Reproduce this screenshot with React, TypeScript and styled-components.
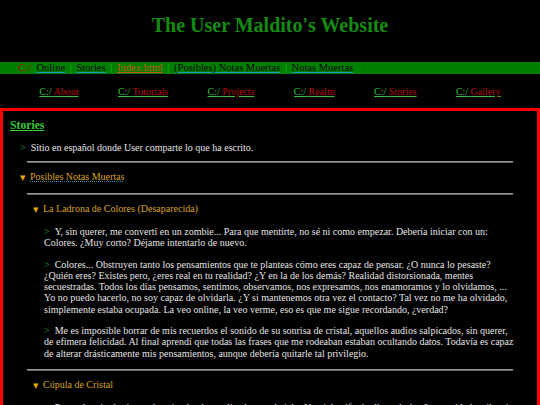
import React from "react";
import styled, { createGlobalStyle } from "styled-components";

const GlobalStyle = createGlobalStyle`
  html, body {
    margin: 0;
    padding: 0;
    background: #000;
  }
  body {
    font-family: "Liberation Serif", "Times New Roman", serif;
    font-size: 10px;
    color: #e4e4e4;
  }
`;

const Header = styled.header`
  padding: 13.5px 0 25.5px;
  text-align: center;
`;

const Title = styled.h1`
  margin: 0;
  font-size: 20px;
  font-weight: bold;
  color: #148c14;
`;

const CrumbBar = styled.div`
  background: #008000;
  padding-left: 18px;
  height: 11.5px;
  line-height: 11.5px;
  font-size: 10.5px;
  white-space: nowrap;
`;

const Drive = styled.span`
  color: #a01000;
  margin-right: 3px;
`;

const Crumb = styled.a<{ $current?: boolean }>`
  color: ${(p) => (p.$current ? "#c4561c" : "#000")};
  text-decoration: underline;
  text-decoration-color: ${(p) => (p.$current ? "#c4561c" : "#1a9dc4")};
`;

const Sep = styled.span`
  color: #33b833;
  padding: 0 2px;
`;

const Nav = styled.nav`
  display: flex;
  justify-content: space-evenly;
  padding: 12.75px 0 10.25px;
  line-height: 11.5px;
`;

const NavLink = styled.a`
  color: #35c035;
  text-decoration: underline;
  text-decoration-color: #35c035;
`;

const NavName = styled.span`
  color: #b30c0c;
`;

const Section = styled.section`
  border: 3px solid #f00;
  padding: 8px 7px 40px;
`;

const SectionTitle = styled.h3`
  margin: 0 0 9.5px;
  font-size: 11.7px;
  font-weight: bold;
  color: #33cc33;
  text-decoration: underline;
`;

const Intro = styled.p`
  margin: 0;
  padding-left: 10px;
  line-height: 11.5px;
`;

const Arrow = styled.span`
  color: #2aa52a;
  margin-right: 5px;
`;

const Rule = styled.hr`
  margin: 8px 17px;
  border: none;
  border-top: 1px solid #9a9a9a;
  border-bottom: 1px solid #6a6a6a;
`;

const Details = styled.details``;

const Summary = styled.summary<{ $indent: number; $linked?: boolean }>`
  list-style: none;
  padding-left: ${(p) => p.$indent}px;
  color: #d9a21e;
  line-height: 11.5px;
  cursor: pointer;
  &::-webkit-details-marker {
    display: none;
  }
  span.label {
    text-decoration: ${(p) => (p.$linked ? "underline dotted" : "none")};
    text-decoration-color: #1f8fb0;
  }
`;

const Marker = styled.span`
  display: inline-block;
  font-family: "DejaVu Sans", sans-serif;
  font-size: 7px;
  color: #e8a800;
  width: 10px;
`;

const StoryBody = styled.div`
  padding: 10px 13px 0 34px;
`;

const Para = styled.p`
  margin: 0 0 10px;
  line-height: 11.3px;
`;

const stories = [
  {
    title: "La Ladrona de Colores (Desaparecida)",
    paragraphs: [
      "Y, sin querer, me convertí en un zombie... Para que mentirte, no sé ni como empezar. Debería iniciar con un: Colores. ¿Muy corto? Déjame intentarlo de nuevo.",
      "Colores... Obstruyen tanto los pensamientos que te planteas cómo eres capaz de pensar. ¿O nunca lo pesaste? ¿Quién eres? Existes pero, ¿eres real en tu realidad? ¿Y en la de los demás? Realidad distorsionada, mentes secuestradas. Todos los días pensamos, sentimos, observamos, nos expresamos, nos enamoramos y lo olvidamos, ... Yo no puedo hacerlo, no soy capaz de olvidarla. ¿Y si mantenemos otra vez el contacto? Tal vez no me ha olvidado, simplemente estaba ocupada. La veo online, la veo verme, eso es que me sigue recordando, ¿verdad?",
      "Me es imposible borrar de mis recuerdos el sonido de su sonrisa de cristal, aquellos audios salpicados, sin querer, de efimera felicidad. Al final aprendí que todas las frases que me rodeaban estaban ocultando datos. Todavía es capaz de alterar drásticamente mis pensamientos, aunque debería quitarle tal privilegio.",
    ],
  },
  {
    title: "Cúpula de Cristal",
    paragraphs: [
      "Pongo la mirada sin rumbo, siendo obstaculizado por el cielo. Un cielo cifrado, lleno de 1 y 0, oscuridad y silencio. Nada parece real bajo esta cúpula de cristal.",
    ],
  },
];

const navItems = ["About", "Tutorials", "Projects", "Realm", "Stories", "Gallery"];

const Story = ({ title, paragraphs }: { title: string; paragraphs: string[] }) => (
  <Details open>
    <Summary $indent={23}>
      <Marker>▼</Marker>
      <span className="label">{title}</span>
    </Summary>
    <StoryBody>
      {paragraphs.map((text, i) => (
        <Para key={i}>
          <Arrow>&gt;</Arrow>
          {text}
        </Para>
      ))}
    </StoryBody>
  </Details>
);

export default function App() {
  return (
    <>
      <GlobalStyle />
      <Header>
        <Title>The User Maldito's Website</Title>
      </Header>
      <CrumbBar>
        <Drive>C:/</Drive> <Crumb href="#">Online</Crumb>
        <Sep> | </Sep>
        <Crumb href="#">Stories</Crumb>
        <Sep> | </Sep>
        <Crumb href="#" $current>
          Index.html
        </Crumb>
        <Sep> | </Sep>
        <Crumb href="#">(Posibles) Notas Muertas</Crumb>
        <Sep> | </Sep>
        <Crumb href="#">Notas Muertas</Crumb>
      </CrumbBar>
      <Nav>
        {navItems.map((name) => (
          <NavLink href="#" key={name}>
            C:/ <NavName>{name}</NavName>
          </NavLink>
        ))}
      </Nav>
      <Section>
        <SectionTitle>Stories</SectionTitle>
        <Intro>
          <Arrow>&gt;</Arrow>
          Sitio en español donde User comparte lo que ha escrito.
        </Intro>
        <Rule />
        <Details open>
          <Summary $indent={10} $linked>
            <Marker>▼</Marker>
            <span className="label">Posibles Notas Muertas</span>
          </Summary>
          <Rule />
          {stories.map((s, i) => (
            <React.Fragment key={s.title}>
              {i > 0 && <Rule />}
              <Story title={s.title} paragraphs={s.paragraphs} />
            </React.Fragment>
          ))}
        </Details>
      </Section>
    </>
  );
}
